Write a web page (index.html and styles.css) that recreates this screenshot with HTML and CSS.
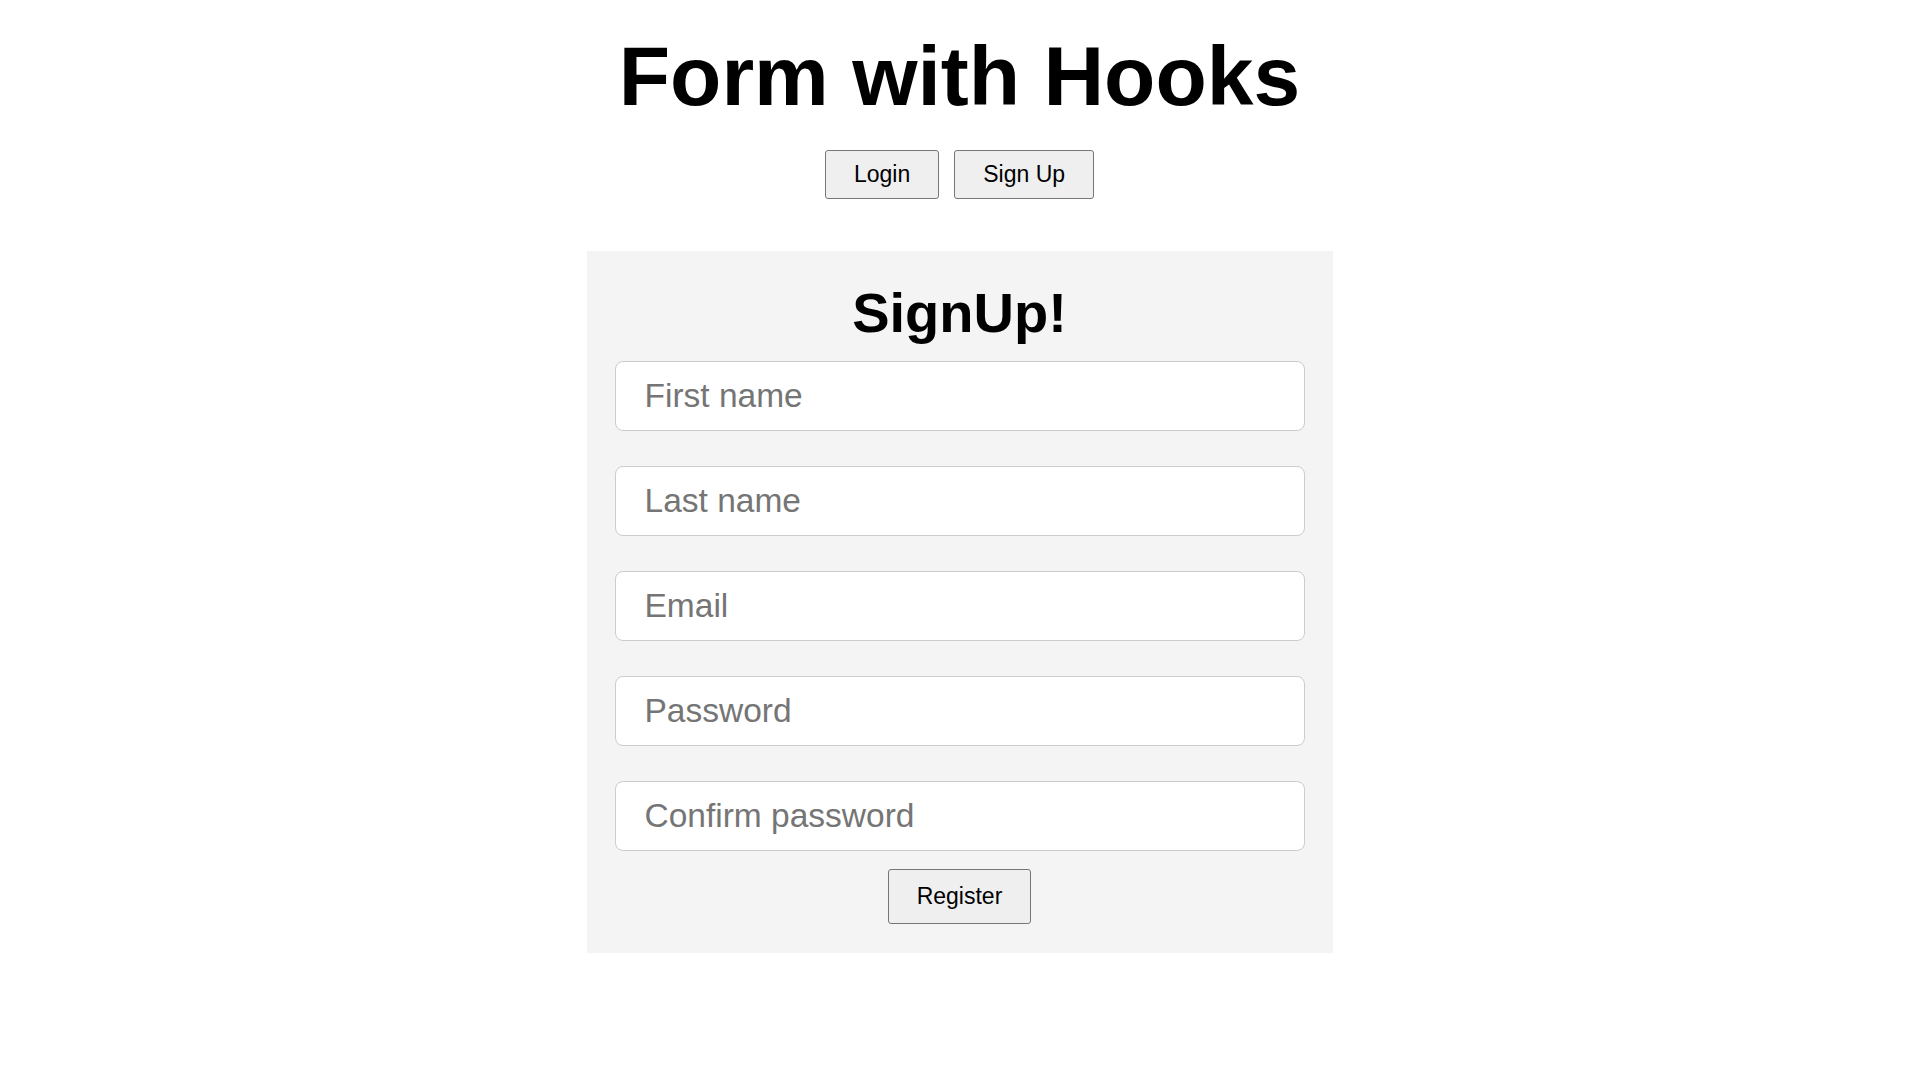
FILE: index.html
```html
<!DOCTYPE html>
<html lang="en">
<head>
<meta charset="utf-8">
<title>Form with Hooks</title>
<link rel="stylesheet" href="styles.css">
</head>
<body>
  <h1 class="title">Form with Hooks</h1>
  <div class="tabs">
    <button class="btn tab" type="button">Login</button>
    <button class="btn tab" type="button">Sign Up</button>
  </div>
  <form class="card">
    <h2 class="card-title">SignUp!</h2>
    <input class="field" type="text" placeholder="First name">
    <input class="field" type="text" placeholder="Last name">
    <input class="field" type="email" placeholder="Email">
    <input class="field" type="password" placeholder="Password">
    <input class="field last" type="password" placeholder="Confirm password">
    <button class="btn submit" type="button">Register</button>
  </form>
</body>
</html>
```
FILE: styles.css
```css
html, body {
  margin: 0;
  padding: 0;
  background: #ffffff;
}
body {
  font-family: "Liberation Sans", Arial, sans-serif;
  color: #000;
  display: flex;
  flex-direction: column;
  align-items: center;
}
.title {
  font-size: 84px;
  font-weight: bold;
  line-height: 96px;
  margin: 28px 0 0;
}
.tabs {
  display: flex;
  gap: 15px;
  margin-top: 26px;
}
.btn {
  font-family: "Liberation Sans", Arial, sans-serif;
  color: #000;
  background: #efefef;
  border: 1px solid #767676;
  border-radius: 3px;
  box-sizing: border-box;
  padding: 0 28px;
  cursor: pointer;
}
.tab {
  font-size: 23px;
  height: 49px;
}
.card {
  box-sizing: border-box;
  width: 746px;
  margin-top: 52px;
  background: #f4f4f4;
  padding: 30px 28px 29px;
  display: flex;
  flex-direction: column;
  align-items: center;
}
.card-title {
  font-size: 56px;
  font-weight: bold;
  line-height: 64px;
  margin: 0 0 16px;
}
.field {
  box-sizing: border-box;
  width: 100%;
  height: 70px;
  margin: 0 0 35px;
  padding: 0 29px;
  font-family: "Liberation Sans", Arial, sans-serif;
  font-size: 33.5px;
  color: #000;
  background: #fff;
  border: 1px solid #cccccc;
  border-radius: 8px;
  outline: none;
}
.field::placeholder {
  color: #757575;
}
.field.last {
  margin-bottom: 18px;
}
.submit {
  font-size: 23px;
  height: 55px;
}
```
